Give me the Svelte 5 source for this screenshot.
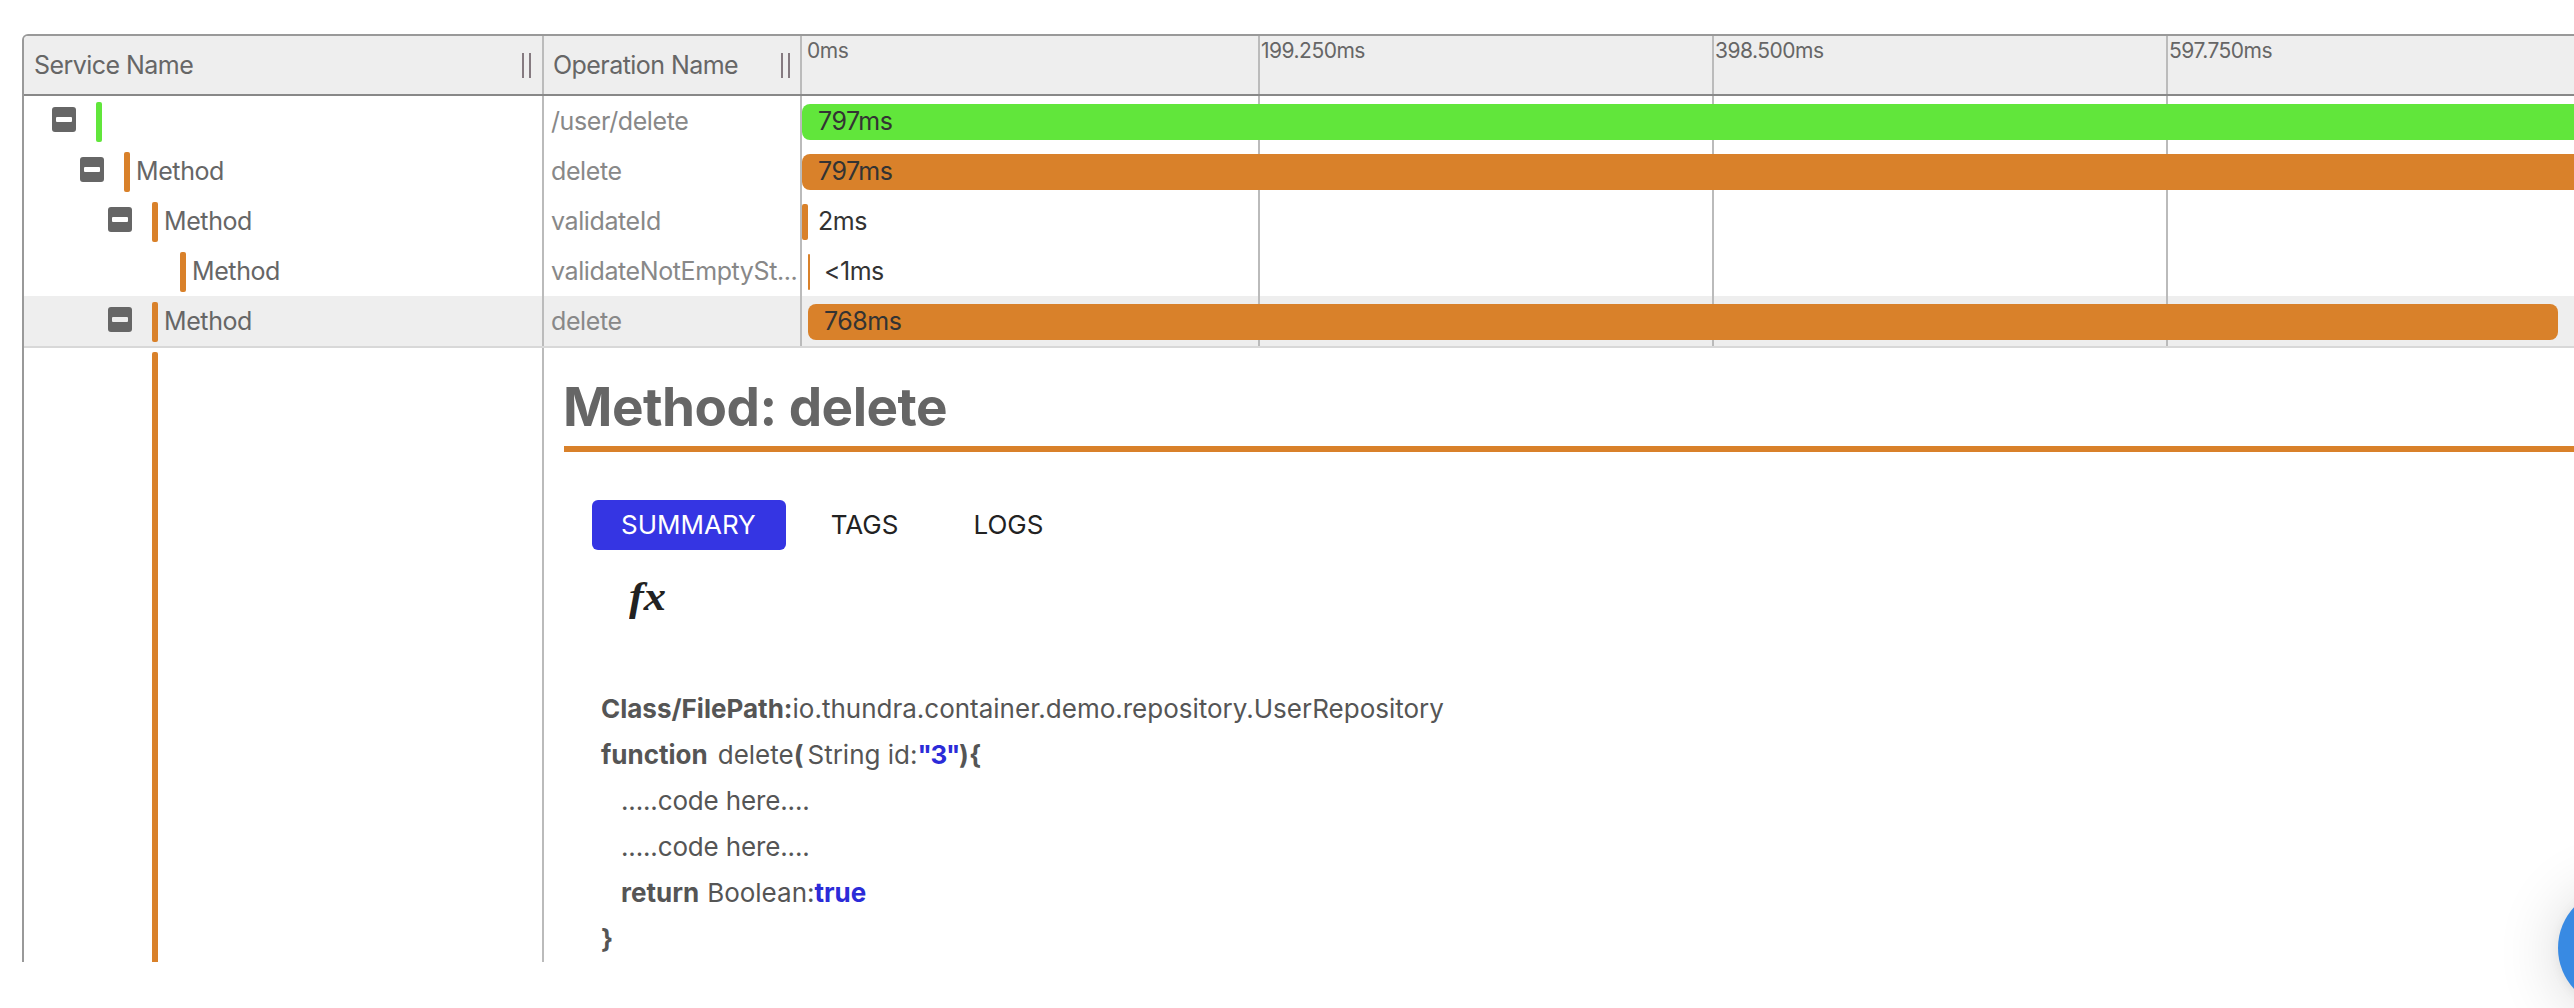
<script>
  const ORANGE = '#d9812a';
  const GREEN = '#61e63b';

  const ticks = ['0ms', '199.250ms', '398.500ms', '597.750ms'];

  // start and width are positions on the timeline, in pixels
  const spans = [
    { service: '', operation: '/user/delete', depth: 0, open: true, color: GREEN, start: 0, width: 1816, time: '797ms' },
    { service: 'Method', operation: 'delete', depth: 1, open: true, color: ORANGE, start: 0, width: 1816, time: '797ms' },
    { service: 'Method', operation: 'validateId', depth: 2, open: true, color: ORANGE, start: 0, width: 6, time: '2ms' },
    { service: 'Method', operation: 'validateNotEmptySt...', depth: 3, open: false, color: ORANGE, start: 6, width: 2, time: '<1ms' },
    { service: 'Method', operation: 'delete', depth: 2, open: true, color: ORANGE, start: 6, width: 1750, time: '768ms', selected: true }
  ];

  const tabs = ['SUMMARY', 'TAGS', 'LOGS'];
  let active = $state('SUMMARY');
</script>

<main class="page">
  <section class="trace">
    <header class="head">
      <div class="service title">
        <span>Service Name</span>
        <i class="grip"></i>
      </div>
      <div class="operation title">
        <span>Operation Name</span>
        <i class="grip"></i>
      </div>
      <div class="timeline">
        {#each ticks as tick}
          <div class="tick"><span>{tick}</span></div>
        {/each}
      </div>
    </header>

    {#each spans as span}
      <div class="row" class:selected={span.selected}>
        <div class="service" style:padding-left="{28 + span.depth * 28}px">
          <span class="slot">
            {#if span.open}
              <svg class="toggle" viewBox="0 0 24 25">
                <rect width="24" height="25" rx="3" fill="#666" />
                <rect x="4" y="10" width="16" height="5" rx="1" fill={span.selected ? '#eee' : '#fff'} />
              </svg>
            {/if}
          </span>
          <span class="mark" style:background={span.color}></span>
          <span class="label">{span.service}</span>
        </div>
        <div class="operation"><span class="name">{span.operation}</span></div>
        <div class="timeline">
          {#each ticks as _}
            <div class="tick"></div>
          {/each}
          <div class="lane">
            <div
              class="bar"
              class:thin={span.width < 20}
              style:margin-left="{span.start}px"
              style:width="{span.width}px"
              style:background={span.color}
            >
              <span class="time">{span.time}</span>
            </div>
          </div>
        </div>
      </div>
    {/each}

    <div class="detail">
      <div class="service rail"><span></span></div>
      <div class="panel">
        <h1>Method: delete</h1>
        <nav>
          {#each tabs as tab}
            <button class:active={active === tab} onclick={() => (active = tab)}>{tab}</button>
          {/each}
        </nav>
        <div class="fx">fx</div>
        <div class="code">
          <div><b>Class/FilePath:</b>io.thundra.container.demo.repository.UserRepository</div>
          <div><b class="fn">function</b>delete<b class="paren">(</b>String id:<b class="value quoted">"3"</b><b>){'{'}</b></div>
          <div class="in filler">.....code here....</div>
          <div class="in filler">.....code here....</div>
          <div class="in"><b class="ret">return</b>Boolean:<b class="value">true</b></div>
          <div><b>{'}'}</b></div>
        </div>
      </div>
    </div>
  </section>

  <div class="chat"></div>
</main>

<style>
  :global(body) {
    background: #fff;
  }
  .page {
    position: relative;
    box-sizing: border-box;
    width: 100%;
    height: 1008px;
    padding: 34px 0 0 22px;
    overflow: hidden;
    font-family: Inter, 'Liberation Sans', sans-serif;
    font-size: 25px;
    color: #666;
  }
  .trace {
    box-sizing: border-box;
    display: flex;
    flex-direction: column;
    width: 2600px;
    height: 928px;
    border: 2px solid #999;
    border-bottom: 0;
    border-radius: 6px 0 0 0;
    overflow: hidden;
  }
  .head,
  .row,
  .detail {
    display: flex;
    flex: none;
    box-sizing: border-box;
  }
  .head,
  .row {
    letter-spacing: -0.5px;
  }
  .head {
    height: 60px;
    background: #eee;
    border-bottom: 2px solid #888;
  }
  .service,
  .operation {
    flex: none;
    box-sizing: border-box;
    border-right: 2px solid #bbb;
    display: flex;
    align-items: center;
    white-space: nowrap;
  }
  .service {
    width: 520px;
  }
  .operation {
    width: 258px;
    padding-left: 7px;
    color: #888;
    letter-spacing: -0.4px;
  }
  .title {
    justify-content: space-between;
    padding: 0 11px 0 10px;
    color: #666;
    letter-spacing: -0.55px;
  }
  .operation.title {
    padding: 0 10px 0 9px;
  }
  .grip {
    width: 5px;
    height: 25px;
    border: solid #857a80;
    border-width: 0 2px;
  }
  .timeline {
    position: relative;
    flex: 1;
    display: flex;
    min-width: 0;
  }
  .tick {
    flex: none;
    box-sizing: border-box;
    width: 454px;
    border-right: 2px solid #bbb;
    font-size: 21px;
    line-height: 26px;
    padding: 2px 0 0 1px;
  }
  .tick:first-child {
    width: 458px;
    padding-left: 5px;
  }
  .row {
    height: 50px;
  }
  .selected {
    height: 52px;
    background: #eee;
    border-bottom: 2px solid #d8d8d8;
  }
  .slot {
    width: 24px;
    height: 25px;
    margin: -3px 20px 0 0;
  }
  .toggle {
    display: block;
    width: 24px;
    height: 25px;
  }
  .mark {
    width: 6px;
    height: 40px;
    margin: 2px 6px 0 0;
    border-radius: 2px;
  }
  .label {
    letter-spacing: -0.4px;
  }
  .lane {
    position: absolute;
    inset: 8px 0 auto 0;
  }
  .bar {
    height: 36px;
    border-radius: 8px;
    display: flex;
    align-items: center;
    color: #333;
  }
  .time {
    flex: none;
    margin: -3px 0 0 16px;
  }
  .thin {
    border-radius: 2px;
  }
  .detail {
    flex: 1;
  }
  .rail {
    align-items: stretch;
    padding: 4px 0 0 128px;
  }
  .rail span {
    width: 6px;
    background: #d9812a;
    border-radius: 2px 2px 0 0;
  }
  .panel {
    flex: 1;
    padding-left: 20px;
  }
  h1 {
    margin: 0;
    height: 98px;
    border-bottom: 6px solid #d9812a;
    font-size: 53px;
    line-height: 119px;
    font-weight: 700;
    letter-spacing: -0.5px;
    text-indent: -1px;
  }
  nav {
    display: flex;
    padding: 48px 0 0 28px;
  }
  button {
    height: 50px;
    padding: 0 30px 2px 29px;
    margin-right: 16px;
    border: 0;
    border-radius: 6px;
    background: none;
    font: inherit;
    font-size: 26px;
    color: #222;
  }
  .active {
    background: #3535e3;
    color: #fff;
  }
  .fx {
    width: 40px;
    height: 60px;
    margin: 18px 0 0 65px;
    font: italic bold 39px/58px 'Liberation Serif', serif;
    color: #222;
    transform: scaleX(1.14);
    transform-origin: 0 0;
  }
  .code {
    margin: 58px 0 0 37px;
    font-size: 26px;
    line-height: 46px;
    color: #555;
    white-space: nowrap;
  }
  .fn {
    margin-right: 10px;
  }
  .paren {
    margin-right: 4px;
  }
  .ret {
    margin-right: 8px;
  }
  .in {
    padding-left: 20px;
  }
  .filler {
    letter-spacing: -0.15px;
  }
  .value {
    color: #2b2bd8;
  }
  .quoted {
    letter-spacing: -1.3px;
  }
  .chat {
    position: absolute;
    left: 2558px;
    top: 888px;
    width: 120px;
    height: 120px;
    border-radius: 50%;
    background: #388ae3;
    box-shadow: 0 2px 12px rgba(0, 0, 0, 0.06), 0 4px 64px rgba(0, 0, 0, 0.16);
  }
</style>
